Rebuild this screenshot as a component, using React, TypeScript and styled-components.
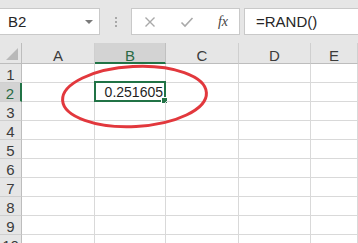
import React from 'react';
import styled, { createGlobalStyle } from 'styled-components';

const GlobalStyle = createGlobalStyle`
  html, body {
    margin: 0;
    padding: 0;
    background: #ffffff;
  }
  body {
    font-family: "Liberation Sans", Arial, sans-serif;
  }
`;

const COLUMNS = ['A', 'B', 'C', 'D', 'E'];
const ROWS = [1, 2, 3, 4, 5, 6, 7, 8, 9, 10];
const ACTIVE_COL = 'B';
const ACTIVE_ROW = 2;

const Page = styled.div`
  position: relative;
  width: 358px;
  height: 243px;
  overflow: hidden;
  background: #ffffff;
`;

const FormulaBar = styled.div`
  display: flex;
  align-items: flex-start;
  height: 43px;
  padding-top: 8px;
  box-sizing: border-box;
  background: #e6e6e6;
`;

const Field = styled.div`
  display: flex;
  align-items: center;
  height: 27px;
  box-sizing: border-box;
  background: #ffffff;
  border: 1px solid #c9c9c9;
  font-size: 15px;
  color: #262626;
`;

const NameBox = styled(Field)`
  width: 101px;
  margin-left: -1px;
  padding: 0 6px 0 8px;
  justify-content: space-between;
`;

const DropArrow = styled.span`
  width: 0;
  height: 0;
  border-left: 4px solid transparent;
  border-right: 4px solid transparent;
  border-top: 4px solid #7a7a7a;
`;

const Grip = styled.div`
  display: flex;
  flex-direction: column;
  align-items: center;
  justify-content: center;
  gap: 2px;
  width: 31px;
  height: 27px;
`;

const Dot = styled.span`
  width: 2px;
  height: 2px;
  background: #a8a8a8;
`;

const ButtonBox = styled(Field)`
  width: 109px;
  padding: 0 11px 0 12px;
  justify-content: space-between;
`;

const FxLabel = styled.span`
  font-family: "Liberation Serif", "Times New Roman", serif;
  font-style: italic;
  font-size: 14px;
  color: #444444;
`;

const FormulaInput = styled(Field)`
  flex: 1;
  margin-left: 4px;
  padding-left: 11px;
  border-right: none;
`;

const Sheet = styled.div`
  display: grid;
  grid-template-columns: 22px 73px 71px 73px 72px 1fr;
  grid-template-rows: 21px;
  grid-auto-rows: 19px;
`;

const Cell = styled.div`
  position: relative;
  box-sizing: border-box;
  border-right: 1px solid #d9d9d9;
  border-bottom: 1px solid #d9d9d9;
  display: flex;
  align-items: center;
  justify-content: flex-end;
  padding-right: 2px;
  font-size: 14px;
  color: #1f1f1f;
`;

const ColHeader = styled.div<{ $active?: boolean }>`
  box-sizing: border-box;
  display: flex;
  align-items: center;
  justify-content: center;
  padding-top: 5px;
  font-size: 15px;
  background: ${(p) => (p.$active ? '#d3d3d3' : '#e6e6e6')};
  color: ${(p) => (p.$active ? '#2a6a45' : '#3b3b3b')};
  border-right: 1px solid ${(p) => (p.$active ? '#c0c0c0' : '#cfcfcf')};
  border-bottom: ${(p) => (p.$active ? '2px solid #217346' : '1px solid #bdbdbd')};
`;

const RowHeader = styled.div<{ $active?: boolean }>`
  box-sizing: border-box;
  display: flex;
  align-items: center;
  justify-content: center;
  padding-top: 2px;
  font-size: 15px;
  background: ${(p) => (p.$active ? '#d3d3d3' : '#e6e6e6')};
  color: ${(p) => (p.$active ? '#2a6a45' : '#3b3b3b')};
  border-right: ${(p) => (p.$active ? '2px solid #217346' : '1px solid #bdbdbd')};
  border-bottom: 1px solid #cfcfcf;
`;

const Corner = styled.div`
  position: relative;
  box-sizing: border-box;
  background: #e6e6e6;
  border-right: 1px solid #bdbdbd;
  border-bottom: 1px solid #bdbdbd;
  &::after {
    content: '';
    position: absolute;
    right: 3px;
    bottom: 3px;
    width: 0;
    height: 0;
    border-left: 12px solid transparent;
    border-bottom: 12px solid #b9b9b9;
  }
`;

const Selection = styled.div`
  position: absolute;
  top: -2px;
  left: -1px;
  right: -1px;
  bottom: -1px;
  border: 2px solid #217346;
  pointer-events: none;
`;

const FillHandle = styled.span`
  position: absolute;
  right: -4px;
  bottom: -4px;
  width: 5px;
  height: 5px;
  background: #217346;
  border: 1px solid #ffffff;
`;

const Annotation = styled.svg`
  position: absolute;
  left: 0;
  top: 0;
  pointer-events: none;
`;

const values: Record<string, string> = { B2: '0.251605' };

export default function App() {
  return (
    <Page>
      <GlobalStyle />
      <FormulaBar>
        <NameBox>
          <span>B2</span>
          <DropArrow />
        </NameBox>
        <Grip>
          <Dot />
          <Dot />
          <Dot />
        </Grip>
        <ButtonBox>
          <svg width="12" height="12" viewBox="0 0 12 12">
            <path d="M1.5 1.5 L10.5 10.5 M10.5 1.5 L1.5 10.5" stroke="#a9a9a9" strokeWidth="1.4" />
          </svg>
          <svg width="14" height="12" viewBox="0 0 14 12">
            <path d="M1.5 6.5 L5 10 L12.5 2" stroke="#a9a9a9" strokeWidth="1.6" fill="none" />
          </svg>
          <FxLabel>fx</FxLabel>
        </ButtonBox>
        <FormulaInput>=RAND()</FormulaInput>
      </FormulaBar>
      <Sheet>
        <Corner />
        {COLUMNS.map((c) => (
          <ColHeader key={c} $active={c === ACTIVE_COL}>
            {c}
          </ColHeader>
        ))}
        {ROWS.map((r) => (
          <React.Fragment key={r}>
            <RowHeader $active={r === ACTIVE_ROW}>{r}</RowHeader>
            {COLUMNS.map((c) => {
              const id = `${c}${r}`;
              const active = c === ACTIVE_COL && r === ACTIVE_ROW;
              return (
                <Cell key={id}>
                  {values[id]}
                  {active && (
                    <Selection>
                      <FillHandle />
                    </Selection>
                  )}
                </Cell>
              );
            })}
          </React.Fragment>
        ))}
      </Sheet>
      <Annotation width="358" height="243" viewBox="0 0 358 243">
        <ellipse
          cx="134.5"
          cy="96.5"
          rx="72"
          ry="30"
          fill="none"
          stroke="#e2383d"
          strokeWidth="3"
          transform="rotate(-3 134.5 96.5)"
        />
      </Annotation>
    </Page>
  );
}
